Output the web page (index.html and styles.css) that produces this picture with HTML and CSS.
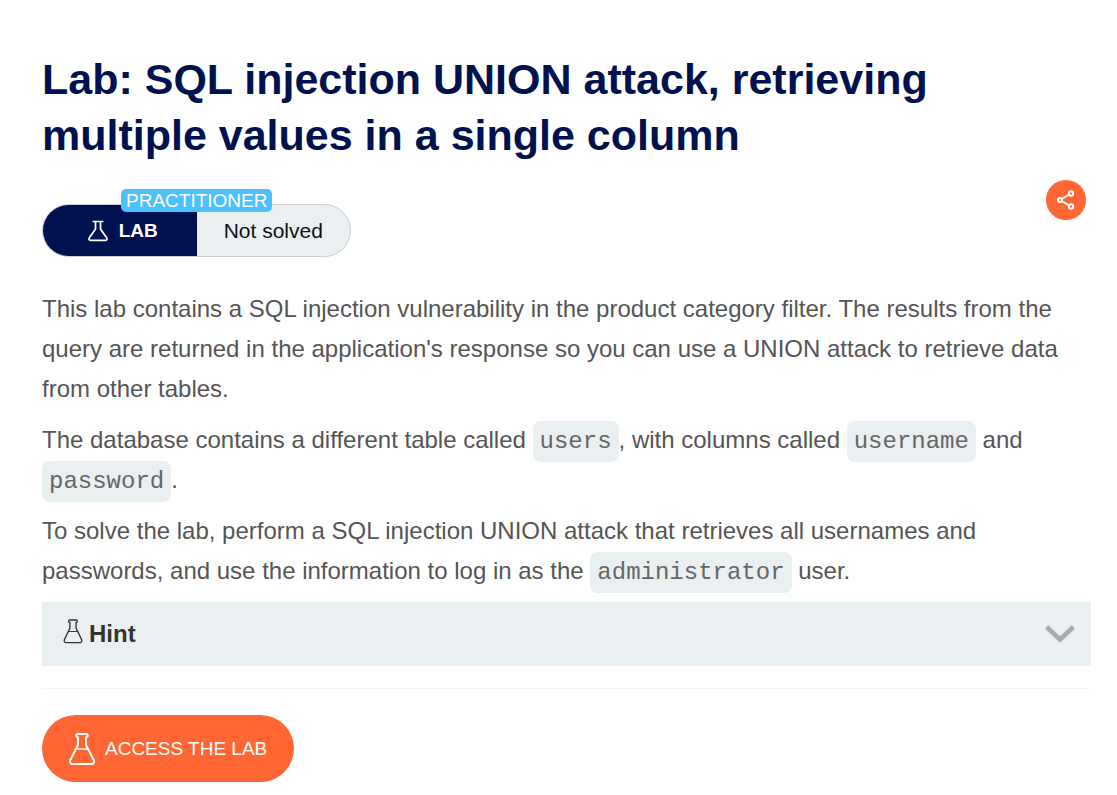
FILE: index.html
```
<!DOCTYPE html>
<html lang="en">
<head>
<meta charset="utf-8">
<meta name="viewport" content="width=device-width, initial-scale=1">
<title>Lab: SQL injection UNION attack</title>
<link rel="stylesheet" href="styles.css">
</head>
<body>
<main class="page">
  <h1 class="title">Lab: SQL injection UNION attack, retrieving multiple values in a single column</h1>
  <div class="meta">
    <div class="status">
      <span class="level">PRACTITIONER</span>
      <span class="status-type">
        <svg class="status-icon" viewBox="0 0 20 22" fill="none" stroke="currentColor" stroke-width="1.700" stroke-linejoin="round"><path d="M4.500 1.500h11M7.500 1.500V9L1.200 18q-.8 2 1.300 2.300h15q2.100-.3 1.300-2.300L12.500 9V1.500"/></svg>
        LAB
      </span>
      <span class="status-state">Not solved</span>
    </div>
    <button class="share" type="button" aria-label="Share">
      <svg class="share-icon" viewBox="0 0 20 20" fill="none" stroke="currentColor" stroke-width="2"><path d="M5.500 9l7-4M5.500 11l7 4"/><circle cx="4" cy="10" r="2"/><circle cx="15" cy="3.500" r="2.200"/><circle cx="15" cy="16.500" r="2.200"/></svg>
    </button>
  </div>
  <div class="description">
    <p>This lab contains a SQL injection vulnerability in the product category filter. The results from the query are returned in the application's response so you can use a UNION attack to retrieve data from other tables.</p>
    <p>The database contains a different table called <code>users</code>, with columns called <code>username</code> and <code>password</code>.</p>
    <p>To solve the lab, perform a SQL injection UNION attack that retrieves all usernames and passwords, and use the information to log in as the <code>administrator</code> user.</p>
  </div>
  <button class="hint" type="button" aria-expanded="false">
    <svg class="hint-icon" viewBox="0 0 20 26" fill="none" stroke="currentColor" stroke-linejoin="round"><path stroke-width="1.400" d="M6 1h8q1.200 1.200 0 2.500h-.8v6l5.800 12q.7 2.700-1.500 3h-15q-2.200-.3-1.500-3l5.800-12v-6H6Q4.800 2.200 6 1z"/><path stroke-width="1" d="M5.500 13h9"/></svg>
    <span class="hint-label">Hint</span>
    <svg class="chevron" viewBox="0 0 30 18" fill="none" stroke="currentColor" stroke-width="4.600"><path d="M1.700 2L15 14.500 28.300 2"/></svg>
  </button>
  <hr class="divider">
  <a class="access" href="#">
    <svg class="access-icon" viewBox="0 0 26 32" fill="none" stroke="currentColor" stroke-linejoin="round"><path stroke-width="2" d="M8 1h10q1.500 1.500 0 3.200h-1V12l7.700 15q1 3.500-1.700 4H3q-2.700-.5-1.700-4L9 12V4.200H8Q6.500 2.500 8 1z"/><path stroke-width="1.500" d="M7.500 16h11"/></svg>
    ACCESS THE LAB
  </a>
</main>
</body>
</html>
```
FILE: styles.css
```
* {
  box-sizing: border-box;
}

body {
  margin: 0;
  background: #fff;
  color: #555;
  font-family: "Liberation Sans", Arial, sans-serif;
}

button {
  border: 0;
  font-family: inherit;
  cursor: pointer;
}

.page {
  padding: 51px 26px 13px 42px;
}

.title {
  margin: 0;
  color: #00114f;
  font-size: 43px;
  line-height: 56px;
}

.meta {
  display: flex;
  justify-content: space-between;
  align-items: flex-start;
  margin-top: 17px;
  padding-right: 5px;
}

.status {
  position: relative;
  display: grid;
  grid-template-columns: 1fr 1fr;
  width: 309px;
  height: 53px;
  margin-top: 24px;
  border: 1px solid #c8cdcf;
  border-radius: 27px;
  background: #eaeff2;
}

.level {
  position: absolute;
  top: -16px;
  left: 78px;
  padding: 0 5px;
  border-radius: 5px;
  background: #4dc0ff;
  color: #fff;
  font-size: 19px;
  line-height: 23px;
}

.status-type,
.status-state {
  display: flex;
  align-items: center;
  justify-content: center;
}

.status-type {
  gap: 11px;
  padding-left: 6px;
  border-radius: 26px 0 0 26px;
  background: #00114f;
  color: #fff;
  font-size: 19px;
  font-weight: bold;
}

.status-state {
  color: #111;
  font-size: 21px;
}

.status-icon {
  width: 20px;
  height: 22px;
}

.share {
  display: flex;
  align-items: center;
  justify-content: center;
  width: 40px;
  height: 40px;
  padding: 0;
  border-radius: 50%;
  background: #ff6633;
  color: #fff;
}

.share-icon {
  width: 20px;
  height: 20px;
}

.description {
  margin-top: 32px;
  font-size: 24px;
  line-height: 40px;
}

.description p {
  margin: 0 0 11px;
}

.description code {
  padding: 7px;
  border-radius: 8px;
  background: #eaeff2;
  color: #666;
  font-family: "Liberation Mono", monospace;
  font-size: 24px;
  line-height: 24px;
}

.hint {
  display: flex;
  align-items: center;
  width: 100%;
  height: 64px;
  padding: 0 16px 0 21px;
  background: #eaeff2;
  color: #333332;
  font-size: 24px;
  font-weight: bold;
}

.hint-icon {
  width: 20px;
  height: 25px;
  margin: 0 6px 6px 0;
}

.chevron {
  width: 30px;
  height: 18px;
  margin-left: auto;
  color: #aaa;
}

.divider {
  margin: 22px 0 26px;
  border: 0;
  border-top: 1px solid #f3f3f3;
}

.access {
  display: inline-flex;
  align-items: center;
  gap: 10px;
  height: 67px;
  padding: 0 27px;
  border-radius: 34px;
  background: #ff6633;
  color: #fff;
  font-size: 19px;
  text-decoration: none;
}

.access-icon {
  width: 26px;
  height: 32px;
}
```
